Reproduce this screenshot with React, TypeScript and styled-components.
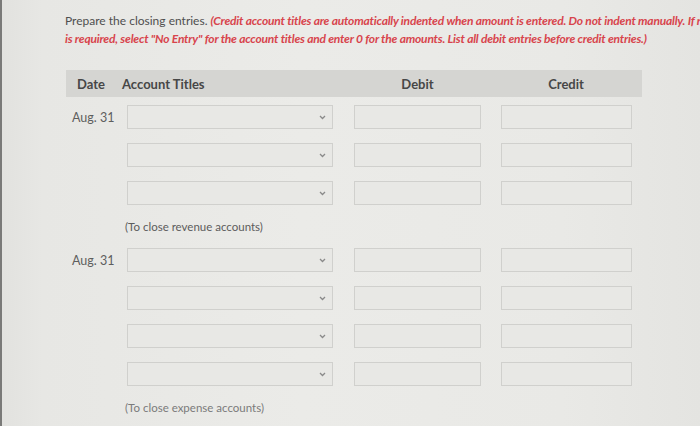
import styled, { createGlobalStyle } from 'styled-components';

const GlobalStyle = createGlobalStyle`
  html, body {
    margin: 0;
    padding: 0;
    width: 700px;
    height: 426px;
    overflow: hidden;
    background: #e7e7e4;
    font-family: Lato, "Open Sans", "Liberation Sans", sans-serif;
  }
`;

const Page = styled.div`
  width: 700px;
  height: 426px;
  box-sizing: border-box;
  border-left: 2px solid #7a7a78;
  background: linear-gradient(90deg, #e2e2df 0px, #e7e7e4 40px, #ebebe8 300px, #e9e9e6 560px, #e4e4e1 700px);
  padding: 12px 0 0 63px;
  overflow: hidden;
`;

const Prompt = styled.div`
  font-size: 12px;
  line-height: 18px;
  color: #4f4f4f;
  white-space: nowrap;
  width: 800px;
`;

const Line = styled.div`
  display: block;
`;

const Red = styled.span`
  color: #d8444c;
  font-size: 12px;
  font-style: italic;
  font-weight: 700;
  letter-spacing: -0.2px;
`;

const Table = styled.div`
  margin-top: 22px;
  margin-left: 1px;
  width: 576px;
`;

const Grid = styled.div`
  display: grid;
  grid-template-columns: 56px 223px 145px 152px;
  align-items: center;
`;

const Header = styled(Grid)`
  height: 27px;
  background: #d5d5d2;
  font-size: 13px;
  font-weight: 700;
  color: #474747;
  margin-bottom: 8px;
`;

const HeadCell = styled.div<{ $center?: boolean }>`
  text-align: ${(p) => (p.$center ? 'center' : 'left')};
  padding-left: ${(p) => (p.$center ? '0' : '11px')};
  &:nth-child(2) {
    padding-left: 0;
  }
`;

const Row = styled(Grid)`
  height: 24px;
  margin-bottom: 14px;
`;

const DateCell = styled.div`
  font-size: 12.5px;
  color: #5e5e5e;
  padding-left: 6px;
`;

const SelectBox = styled.div`
  position: relative;
  margin-left: 5px;
  width: 206px;
  height: 24px;
  box-sizing: border-box;
  border: 1px solid #d0d0cd;
  background: #e8e8e5;
`;

const Chevron = styled.svg`
  position: absolute;
  right: 6px;
  top: 9px;
`;

const AmountBox = styled.div<{ $offset: number; $w: number }>`
  margin-left: ${(p) => p.$offset}px;
  width: ${(p) => p.$w}px;
  height: 24px;
  box-sizing: border-box;
  border: 1px solid #d0d0cd;
  background: #e8e8e5;
`;

const Memo = styled.div<{ $faded?: boolean }>`
  padding-left: 59px;
  font-size: 11.5px;
  height: 16px;
  line-height: 16px;
  color: ${(p) => (p.$faded ? '#7b7b7b' : '#5c5c5c')};
  margin-top: 1px;
  margin-bottom: 13px;
`;

const EntryRow = ({ date }: { date?: string }) => (
  <Row>
    <DateCell>{date}</DateCell>
    <SelectBox>
      <Chevron width="7" height="5" viewBox="0 0 7 5">
        <path d="M1 1 L3.5 3.5 L6 1" fill="none" stroke="#8a8a8a" strokeWidth="1.3" />
      </Chevron>
    </SelectBox>
    <AmountBox $offset={9} $w={127} />
    <AmountBox $offset={11} $w={131} />
  </Row>
);

const App = () => (
  <>
    <GlobalStyle />
    <Page>
      <Prompt>
        <Line>
          Prepare the closing entries.{' '}
          <Red>
            (Credit account titles are automatically indented when amount is entered. Do not indent manually. If no entry
          </Red>
        </Line>
        <Line>
          <Red>
            is required, select "No Entry" for the account titles and enter 0 for the amounts. List all debit entries before credit entries.)
          </Red>
        </Line>
      </Prompt>
      <Table>
        <Header>
          <HeadCell>Date</HeadCell>
          <HeadCell>Account Titles</HeadCell>
          <HeadCell $center>Debit</HeadCell>
          <HeadCell $center>Credit</HeadCell>
        </Header>
        <EntryRow date="Aug. 31" />
        <EntryRow />
        <EntryRow />
        <Memo>(To close revenue accounts)</Memo>
        <EntryRow date="Aug. 31" />
        <EntryRow />
        <EntryRow />
        <EntryRow />
        <Memo $faded>(To close expense accounts)</Memo>
      </Table>
    </Page>
  </>
);

export default App;
